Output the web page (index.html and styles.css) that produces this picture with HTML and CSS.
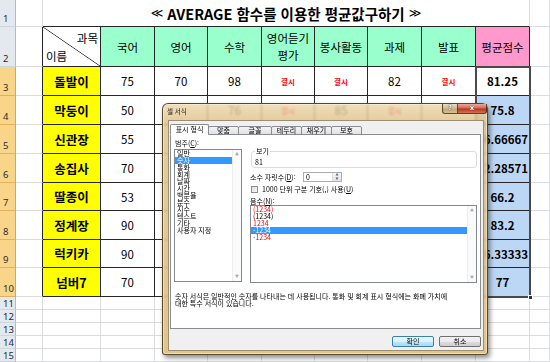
FILE: index.html
```html
<!DOCTYPE html>
<html lang="ko">
<head>
<meta charset="utf-8">
<title>AVERAGE 함수</title>
<link rel="stylesheet" href="styles.css">
</head>
<body>
<div class="sheet">
  <div class="row h27">
    <div class="rh">1</div>
    <div class="c"></div>
    <div class="c title"><span class="ang">≪</span>&nbsp;AVERAGE 함수를 이용한 평균값구하기&nbsp;<span class="ang">≫</span></div>
    <div class="c"></div>
  </div>
  <div class="row h40">
    <div class="rh">2</div>
    <div class="c ta"></div>
    <div class="c t diag"><span class="d1">과목</span><span class="d2">이름</span></div>
    <div class="c t g">국어</div>
    <div class="c t g">영어</div>
    <div class="c t g">수학</div>
    <div class="c t g ml">영어듣기<br>평가</div>
    <div class="c t g">봉사활동</div>
    <div class="c t g">과제</div>
    <div class="c t g">발표</div>
    <div class="c t p">평균점수</div>
    <div class="c"></div>
  </div>
  <div class="row h29">
    <div class="rh s">3</div>
    <div class="c ta"></div>
    <div class="c t y">돌발이</div>
    <div class="c t n">75</div>
    <div class="c t n">70</div>
    <div class="c t n">98</div>
    <div class="c t ab">결시</div>
    <div class="c t ab">결시</div>
    <div class="c t n">82</div>
    <div class="c t ab">결시</div>
    <div class="c t avg">81.25</div>
    <div class="c"></div>
  </div>
  <div class="row h29">
    <div class="rh s">4</div>
    <div class="c ta"></div>
    <div class="c t y">막둥이</div>
    <div class="c t n">50</div>
    <div class="c t n"></div>
    <div class="c t n">76</div>
    <div class="c t ab">결시</div>
    <div class="c t n">85</div>
    <div class="c t ab">결시</div>
    <div class="c t n"></div>
    <div class="c t avg hl">75.8</div>
    <div class="c"></div>
  </div>
  <div class="row h29">
    <div class="rh s">5</div>
    <div class="c ta"></div>
    <div class="c t y">신관장</div>
    <div class="c t n">55</div>
    <div class="c t"></div><div class="c t"></div><div class="c t"></div><div class="c t"></div><div class="c t"></div><div class="c t"></div>
    <div class="c t avg hl">66.66667</div>
    <div class="c"></div>
  </div>
  <div class="row h29">
    <div class="rh s">6</div>
    <div class="c ta"></div>
    <div class="c t y">송집사</div>
    <div class="c t n">70</div>
    <div class="c t"></div><div class="c t"></div><div class="c t"></div><div class="c t"></div><div class="c t"></div><div class="c t"></div>
    <div class="c t avg hl">72.28571</div>
    <div class="c"></div>
  </div>
  <div class="row h28">
    <div class="rh s">7</div>
    <div class="c ta"></div>
    <div class="c t y">딸종이</div>
    <div class="c t n">53</div>
    <div class="c t"></div><div class="c t"></div><div class="c t"></div><div class="c t"></div><div class="c t"></div><div class="c t"></div>
    <div class="c t avg hl">66.2</div>
    <div class="c"></div>
  </div>
  <div class="row h29">
    <div class="rh s">8</div>
    <div class="c ta"></div>
    <div class="c t y">정계장</div>
    <div class="c t n">90</div>
    <div class="c t"></div><div class="c t"></div><div class="c t"></div><div class="c t"></div><div class="c t"></div><div class="c t"></div>
    <div class="c t avg hl">83.2</div>
    <div class="c"></div>
  </div>
  <div class="row h28">
    <div class="rh s">9</div>
    <div class="c ta"></div>
    <div class="c t y">럭키카</div>
    <div class="c t n">90</div>
    <div class="c t"></div><div class="c t"></div><div class="c t"></div><div class="c t"></div><div class="c t"></div><div class="c t"></div>
    <div class="c t avg hl">76.33333</div>
    <div class="c"></div>
  </div>
  <div class="row h29">
    <div class="rh s">10</div>
    <div class="c ta"></div>
    <div class="c t y">넘버7</div>
    <div class="c t n">70</div>
    <div class="c t"></div><div class="c t"></div><div class="c t"></div><div class="c t"></div><div class="c t"></div><div class="c t"></div>
    <div class="c t avg hl">77</div>
    <div class="c"></div>
  </div>
  <div class="row h13">
    <div class="rh">11</div>
    <div class="c"></div><div class="c"></div><div class="c"></div><div class="c"></div><div class="c"></div><div class="c"></div><div class="c"></div><div class="c"></div><div class="c"></div><div class="c"></div><div class="c"></div>
  </div>
  <div class="row h13">
    <div class="rh">12</div>
    <div class="c"></div><div class="c"></div><div class="c"></div><div class="c"></div><div class="c"></div><div class="c"></div><div class="c"></div><div class="c"></div><div class="c"></div><div class="c"></div><div class="c"></div>
  </div>
  <div class="row h13">
    <div class="rh">13</div>
    <div class="c"></div><div class="c"></div><div class="c"></div><div class="c"></div><div class="c"></div><div class="c"></div><div class="c"></div><div class="c"></div><div class="c"></div><div class="c"></div><div class="c"></div>
  </div>
  <div class="row h13">
    <div class="rh">14</div>
    <div class="c"></div><div class="c"></div><div class="c"></div><div class="c"></div><div class="c"></div><div class="c"></div><div class="c"></div><div class="c"></div><div class="c"></div><div class="c"></div><div class="c"></div>
  </div>
  <div class="row h13">
    <div class="rh">15</div>
    <div class="c"></div><div class="c"></div><div class="c"></div><div class="c"></div><div class="c"></div><div class="c"></div><div class="c"></div><div class="c"></div><div class="c"></div><div class="c"></div><div class="c"></div>
  </div>

  <div class="selbox"><span class="fh"></span></div>

  <div class="dlg">
    <div class="tbar">
      <span class="tname">셀 서식</span>
      <div class="capbtns"><span class="cb help">?</span><span class="cb close">x</span></div>
    </div>
    <div class="client">
      <div class="tabs">
        <span class="tab on" style="width:39px">표시 형식</span>
        <span class="tab" style="width:31px">맞춤</span>
        <span class="tab" style="width:34px">글꼴</span>
        <span class="tab" style="width:31px">테두리</span>
        <span class="tab" style="width:31px">채우기</span>
        <span class="tab" style="width:31px">보호</span>
      </div>
      <div class="panel">
        <div class="pbody">
          <div class="lcol">
            <div class="lbl">범주(<u>C</u>):</div>
            <div class="list cat">
              <div class="items">
                <div>일반</div>
                <div class="on">숫자</div>
                <div>통화</div>
                <div>회계</div>
                <div>날짜</div>
                <div>시간</div>
                <div>백분율</div>
                <div>분수</div>
                <div>지수</div>
                <div>텍스트</div>
                <div>기타</div>
                <div>사용자 지정</div>
              </div>
              <div class="vs"><span>▲</span><span>▼</span></div>
            </div>
          </div>
          <div class="rcol">
            <fieldset class="sample"><legend>보기</legend><div class="sv">81</div></fieldset>
            <div class="decrow">
              <span class="declbl">소수 자릿수(<u>D</u>):</span>
              <div class="spin"><span class="sval">0</span><span class="sbtn"><i>▲</i><i>▼</i></span></div>
            </div>
            <div class="chkrow"><span class="box"></span><span>1000 단위 구분 기호(,) 사용(<u>U</u>)</span></div>
            <div class="lbl nl">음수(<u>N</u>):</div>
            <div class="list neg">
              <div class="items">
                <div class="red">(1234)</div>
                <div>(1234)</div>
                <div class="red">1234</div>
                <div class="on">-1234</div>
                <div class="red">-1234</div>
              </div>
              <div class="vs"><span>▲</span><span>▼</span></div>
            </div>
          </div>
        </div>
        <p class="desc">숫자 서식은 일반적인 숫자를 나타내는 데 사용됩니다. 통화 및 회계 표시 형식에는 화폐 가치에<br>대한 특수 서식이 있습니다.</p>
      </div>
      <div class="btns">
        <span class="btn def">확인</span>
        <span class="btn">취소</span>
      </div>
    </div>
  </div>
</div>
</body>
</html>
```

FILE: styles.css
```css
* { box-sizing: border-box; }
html, body { margin: 0; padding: 0; width: 550px; height: 362px; overflow: hidden; background: #fff; }
body { font-family: "Noto Sans CJK KR", "Noto Sans", sans-serif; color: #000; }

.sheet { position: relative; width: 550px; height: 362px; overflow: hidden; }
.row { display: grid; grid-template-columns: 16px 27px 58px 54px 53px 54px 53px 53px 54px 54px 54px 20px; }
.h27 { height: 27px; }
.h40 { height: 40px; }
.h29 { height: 29px; }
.h28 { height: 28px; }
.h13 { height: 13px; }

.rh {
  background: #e4e9f0;
  border-right: 1px solid #b1bbc8;
  border-bottom: 1px solid #cfd5dd;
  font: 9.5px/1 "Noto Sans", "Liberation Sans", sans-serif;
  color: #2b2b2b;
  display: flex;
  align-items: flex-end;
  padding: 0 0 3px 3px;
}
.rh.s { background: #f9d58a; border-bottom-color: #e2b160; border-right-color: #d8a650; }
.h13 .rh { padding-bottom: 1px; }

.c {
  border-right: 1px solid #dadcdd;
  border-bottom: 1px solid #dadcdd;
  display: flex;
  align-items: center;
  justify-content: center;
  overflow: hidden;
  white-space: nowrap;
  min-width: 0;
}
.t { border-right-color: #262626; border-bottom-color: #262626; }
.ta { border-right-color: #262626; }
.title { grid-column: span 9; border-bottom-color: #262626; font-weight: 700; font-size: 14.5px; }
.title .ang { font: 400 12px "DejaVu Sans", sans-serif; }
.g { background: #99ffcc; font-size: 11.5px; }
.p { background: #ff99cc; font-size: 11.5px; }
.ml { line-height: 17px; text-align: center; white-space: normal; }
.y { background: #ffff00; font-weight: 700; font-size: 12.5px; }
.n { font-size: 11.5px; }
.ab { color: #ff0000; font-size: 7.5px; font-weight: 700; }
.avg { font-weight: 700; font-size: 11.5px; }
.hl { background: #bcd7f5; }

.diag {
  flex-direction: column;
  align-items: stretch;
  justify-content: space-between;
  padding: 4px 2px 3px 3px;
  font-size: 11.5px;
  background: linear-gradient(to top right, transparent calc(50% - 0.7px), #333 50%, transparent calc(50% + 0.7px));
}
.diag .d1 { align-self: flex-end; line-height: 14px; }
.diag .d2 { align-self: flex-start; line-height: 14px; }

.selbox {
  position: absolute;
  left: 475px; top: 66px; width: 56px; height: 232px;
  border: 2px solid #4a4a4a;
}
.fh {
  position: absolute; right: -4px; bottom: -4px;
  width: 5px; height: 5px; background: #333; border: 1px solid #fff;
}

/* dialog */
.dlg {
  position: absolute;
  left: 162px; top: 103px; width: 326px; height: 252px;
  display: flex; flex-direction: column;
  border: 1px solid rgba(40, 30, 10, 0.75);
  border-radius: 6px 6px 3px 3px;
  background: linear-gradient(180deg, rgba(236, 214, 170, 0.8) 0, rgba(222, 194, 138, 0.84) 18px, rgba(222, 190, 122, 0.9) 100%);
  backdrop-filter: blur(1.2px);
  box-shadow: 2px 3px 5px rgba(0, 0, 0, 0.45), inset 0 0 0 1px rgba(255, 245, 220, 0.5);
  font: 7px/8px "Noto Sans CJK KR", sans-serif;
  color: #000;
}
.tbar { height: 16px; display: flex; align-items: flex-start; }
.tname { font-size: 6.5px; line-height: 7px; padding: 4px 0 0 4px; color: #1a1a1a; }
.capbtns { margin-left: auto; display: flex; }
.cb {
  height: 10px; display: flex; align-items: center; justify-content: center;
  border: 1px solid rgba(60, 40, 20, 0.8); border-top: 0;
  color: #fff; font: 700 7px/1 "DejaVu Sans", sans-serif;
}
.cb.help {
  width: 16px; border-radius: 0 0 0 3px;
  background: linear-gradient(#eadfc8, #cdb690 50%, #bfa577 51%, #d4bf96);
  text-shadow: 0 0 1px #333, 0 0 1px #333;
}
.cb.close {
  width: 29px; border-left: 0; border-radius: 0 0 3px 0;
  background: linear-gradient(#e9aa9c, #d06a55 45%, #b83420 55%, #d0735c);
  text-shadow: 0 0 1px #600;
}

.client {
  flex: 1;
  margin: 0 3px 3px 5px;
  background: #f0f0f0;
  border: 1px solid rgba(120, 100, 60, 0.7);
  padding: 3px 2px 0 1px;
}
.tabs { display: flex; align-items: flex-end; height: 11px; margin-bottom: -1px; position: relative; z-index: 1; }
.tab {
  height: 9px;
  margin-left: -1px;
  border: 1px solid #898c95;
  border-radius: 2px 2px 0 0;
  background: linear-gradient(#f3f3f3, #e2e2e2);
  display: flex; align-items: center; justify-content: center;
  line-height: 7px; white-space: nowrap;
}
.tab:first-child { margin-left: 0; }
.tab.on { height: 11px; background: #fff; border-bottom-color: #fff; }

.panel {
  height: 195px;
  background: #fff;
  border: 1px solid #898c95;
  padding: 4px 3px 0 3px;
}
.pbody { display: flex; gap: 8px; }
.lcol { width: 68px; }
.rcol { width: 227px; padding-top: 9px; }
.lbl { line-height: 8px; padding-left: 1px; white-space: nowrap; }
.list { border: 1px solid #828790; background: #fff; display: flex; }
.cat { margin-top: 2px; height: 133px; }
.neg { height: 78px; }
.items { flex: 1; min-width: 0; }
.items div { height: 7px; line-height: 7px; padding-left: 2px; white-space: nowrap; }
.items .on { background: #3399ff; color: #fff; }
.items .red { color: #ff0000; }
.vs {
  width: 9px;
  border-left: 1px solid #ededed;
  background: #fafafa;
  display: flex; flex-direction: column; justify-content: space-between; align-items: center;
  color: #a8a8a8; font-size: 4px; line-height: 7px; padding: 1px 0;
}

.sample {
  margin: 0 0 0 1px;
  padding: 0 0 1px 3px;
  border: 1px solid #d5dfe5;
  border-radius: 3px;
  min-width: 0;
}
.sample legend { padding: 0 1px; line-height: 7px; }
.sv { margin-top: 3px; line-height: 8px; }

.decrow { display: flex; align-items: center; margin-top: 4px; height: 10px; }
.declbl { width: 53px; white-space: nowrap; }
.spin { width: 39px; height: 10px; border: 1px solid #abadb3; display: flex; background: #fff; }
.sval { flex: 1; padding-left: 2px; line-height: 8px; }
.sbtn {
  width: 9px; display: flex; flex-direction: column; justify-content: center;
  border-left: 1px solid #dcdcdc; background: linear-gradient(#f5f5f5, #e3e3e3);
}
.sbtn i { font-style: normal; font-size: 3px; line-height: 4px; text-align: center; color: #4a6a8a; }

.chkrow { display: flex; align-items: center; gap: 4px; margin-top: 3px; height: 8px; padding-left: 1px; white-space: nowrap; }
.box { width: 7px; height: 7px; border: 1px solid #8e8f8f; background: linear-gradient(135deg, #dcdcdc, #fafafa); }
.nl { margin-top: 4px; padding-left: 0; }

.desc { margin: 10px 0 0 0; padding-left: 1px; line-height: 6.5px; white-space: nowrap; }

.btns { display: flex; justify-content: flex-end; gap: 5px; margin-top: 7px; padding-right: 0; }
.btn {
  width: 42px; height: 11px;
  border: 1px solid #707070; border-radius: 2px;
  background: linear-gradient(#f2f2f2, #ebebeb 50%, #dddddd 51%, #cfcfcf);
  display: flex; align-items: center; justify-content: center; line-height: 7px;
}
.btn.def { border-color: #3c7fb1; background: linear-gradient(#eaf6fd, #d9f0fc 50%, #bee6fd 51%, #a7d9f5); }
```
